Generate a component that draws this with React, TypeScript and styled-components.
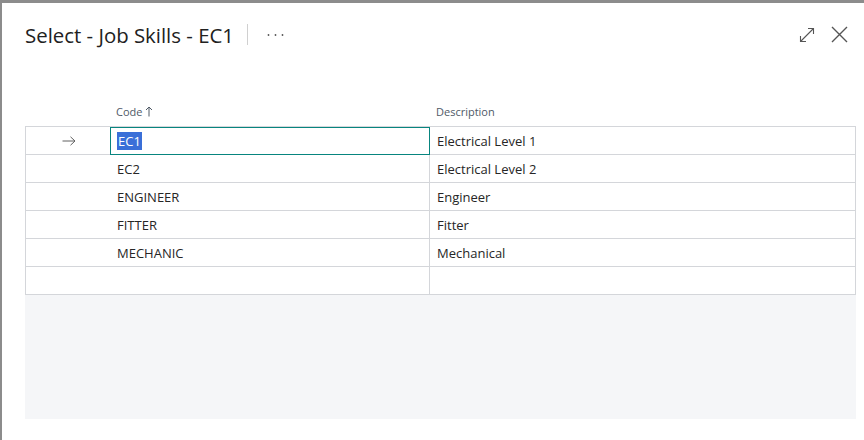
import styled, { createGlobalStyle } from "styled-components"

const GlobalStyle = createGlobalStyle`
  html, body {
    margin: 0;
    padding: 0;
    height: 100%;
    background: #8c8c8c;
    font-family: "Open Sans", "Noto Sans", sans-serif;
    color: #212121;
  }
  #root {
    height: 100%;
  }
`

const Dialog = styled.div`
  box-sizing: border-box;
  height: calc(100% - 3px);
  margin: 3px 0 0 2px;
  background: #ffffff;
  padding: 0 8px 0 23px;
  display: flex;
  flex-direction: column;
`

const TitleBar = styled.div`
  display: flex;
  align-items: center;
  height: 63px;
  padding-right: 8px;
`

const Title = styled.h1`
  margin: 0;
  font-size: 20.4px;
  font-weight: 500;
  color: #212121;
`

const Divider = styled.span`
  width: 1px;
  height: 21px;
  background: #d0d0d0;
  margin: 0 19px 0 13px;
`

const Actions = styled.div`
  margin-left: auto;
  display: flex;
  align-items: center;
  gap: 16px;
`

const IconButton = styled.button`
  border: 0;
  background: transparent;
  padding: 0;
  display: flex;
  align-items: center;
  justify-content: center;
  cursor: pointer;
`

const Grid = styled.div`
  margin-top: 34px;
  display: grid;
  grid-template-columns: 85px 319px 1fr;
`

const HeaderCell = styled.div<{ $pad?: number }>`
  box-sizing: border-box;
  height: 26px;
  display: flex;
  align-items: center;
  padding: 0 0 4px ${(p) => p.$pad ?? 6}px;
  font-size: 11px;
  color: #505a67;
`

const Rows = styled.div`
  border: 1px solid #d4d6da;
  border-bottom: 0;
`

const Row = styled.div`
  display: grid;
  grid-template-columns: 84px 319px 1fr;
  height: 27px;
  border-bottom: 1px solid #d4d6da;
`

const Cell = styled.div<{ $divider?: boolean; $focused?: boolean }>`
  box-sizing: border-box;
  display: flex;
  align-items: center;
  padding-left: ${(p) => (p.$focused ? 6 : 7)}px;
  font-size: 13px;
  color: #262626;
  border-left: ${(p) => (p.$divider ? "1px solid #d4d6da" : "0")};
  ${(p) =>
    p.$focused &&
    `
    border: 1px solid #08857f;
    margin: 0 -1px -1px 0;
    position: relative;
    height: 28px;
  `}
`

const Marker = styled.div`
  display: flex;
  align-items: center;
  justify-content: flex-end;
  padding-right: 34px;
`

const Selected = styled.span`
  background: #3a6fd8;
  color: #ffffff;
  line-height: 18px;
  padding: 0 1px;
`

const EmptyArea = styled.div`
  height: 124px;
  background: #f5f6f8;
`

const SortArrow = () => (
  <svg width="8" height="11" viewBox="0 0 8 11" style={{ marginLeft: 3 }}>
    <path d="M4 10.5V1M1 4l3-3 3 3" fill="none" stroke="#505a67" strokeWidth="1" />
  </svg>
)

const RowArrow = () => (
  <svg width="14" height="10" viewBox="0 0 14 10">
    <path d="M0.5 5h12.5M8.5 0.8L13 5l-4.5 4.2" fill="none" stroke="#606060" strokeWidth="1" />
  </svg>
)

const rows = [
  { code: "EC1", description: "Electrical Level 1" },
  { code: "EC2", description: "Electrical Level 2" },
  { code: "ENGINEER", description: "Engineer" },
  { code: "FITTER", description: "Fitter" },
  { code: "MECHANIC", description: "Mechanical" },
  { code: "", description: "" },
]

export default function App() {
  return (
    <>
      <GlobalStyle />
      <Dialog>
        <TitleBar>
          <Title>Select - Job Skills - EC1</Title>
          <Divider />
          <IconButton aria-label="More options">
            <svg width="17" height="4" viewBox="0 0 17 4">
              <circle cx="1.5" cy="2" r="0.9" fill="#555" />
              <circle cx="8.5" cy="2" r="0.9" fill="#555" />
              <circle cx="15.5" cy="2" r="0.9" fill="#555" />
            </svg>
          </IconButton>
          <Actions>
            <IconButton aria-label="Expand">
              <svg width="16" height="16" viewBox="0 0 16 16">
                <path
                  d="M1.5 14.5L14.5 1.5M9 1.5h5.5V7M1.5 9v5.5H7"
                  fill="none"
                  stroke="#555"
                  strokeWidth="1.1"
                />
              </svg>
            </IconButton>
            <IconButton aria-label="Close">
              <svg width="17" height="17" viewBox="0 0 17 17">
                <path d="M1 1l15 15M16 1L1 16" fill="none" stroke="#555" strokeWidth="1.4" />
              </svg>
            </IconButton>
          </Actions>
        </TitleBar>

        <Grid>
          <HeaderCell />
          <HeaderCell $pad={6}>
            Code
            <SortArrow />
          </HeaderCell>
          <HeaderCell $pad={7}>Description</HeaderCell>
        </Grid>
        <Rows>
          {rows.map((row, i) => (
            <Row key={i}>
              <Marker>{i === 0 && <RowArrow />}</Marker>
              <Cell $focused={i === 0}>
                {i === 0 ? <Selected>{row.code}</Selected> : row.code}
              </Cell>
              <Cell $divider>{row.description}</Cell>
            </Row>
          ))}
        </Rows>
        <EmptyArea />
      </Dialog>
    </>
  )
}
